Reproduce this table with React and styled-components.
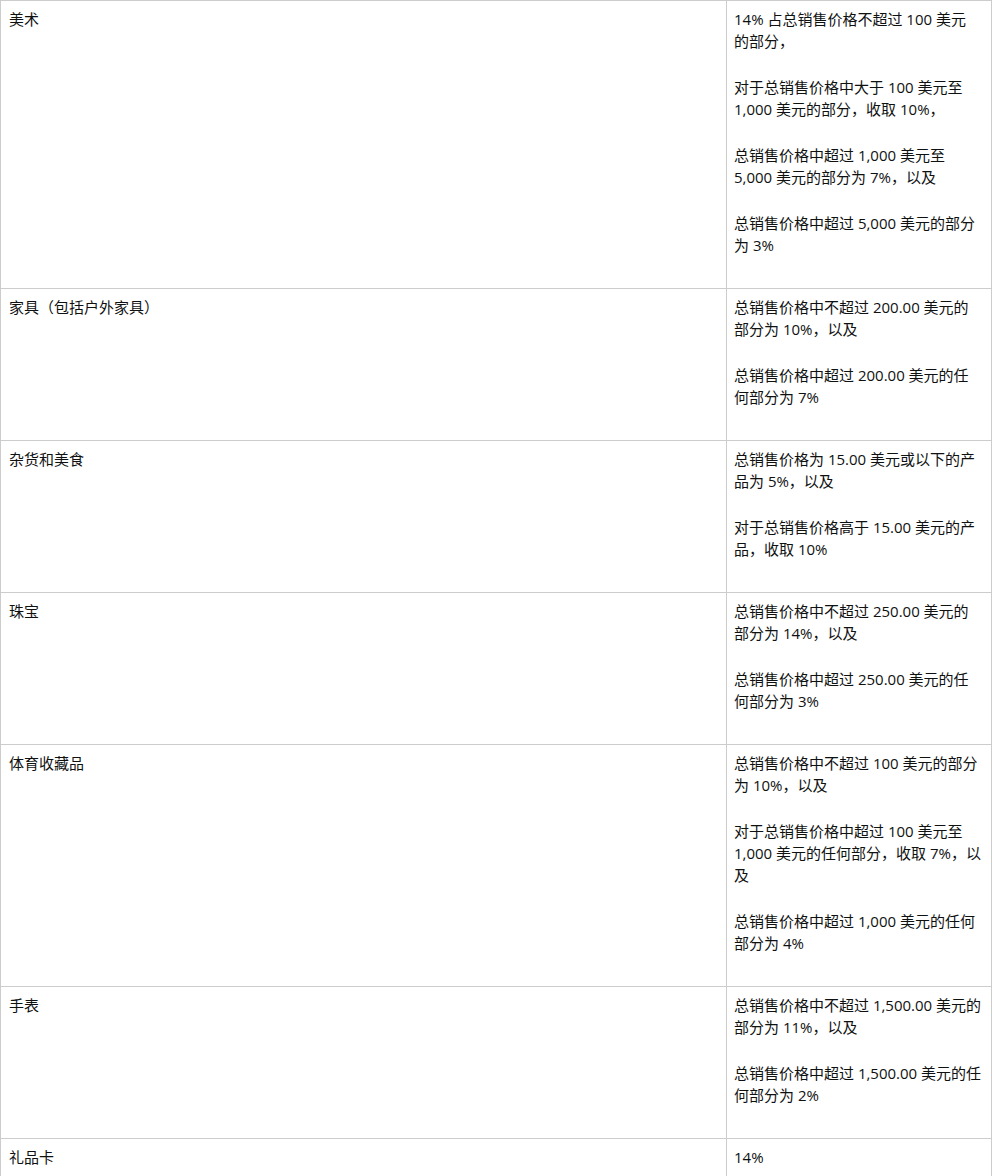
import React from 'react';
import styled, { createGlobalStyle } from 'styled-components';

const GlobalStyle = createGlobalStyle`
  html, body {
    margin: 0;
    padding: 0;
    background: #fff;
  }
  body {
    font-family: "Open Sans", "Noto Sans CJK SC", sans-serif;
    color: #0f1111;
  }
`;

const Table = styled.table`
  width: 992px;
  table-layout: fixed;
  border-collapse: collapse;
  font-size: 15px;
  line-height: 22px;
`;

const Row = styled.tr``;

const Cell = styled.td`
  border: 1px solid #cccccc;
  padding: 7px 8px 8px ${p => (p.$right ? '7px' : '8px')};
  vertical-align: top;
  p {
    margin: 0 0 24px;
  }
`;

const Keep = styled.span`
  white-space: nowrap;
`;

const rows = [
  {
    category: '美术',
    fees: [
      <>14% 占总销售价格不超过 100 美元<Keep>的部分</Keep>，</>,
      '对于总销售价格中大于 100 美元至 1,000 美元的部分，收取 10%，',
      '总销售价格中超过 1,000 美元至 5,000 美元的部分为 7%，以及',
      '总销售价格中超过 5,000 美元的部分为 3%',
    ],
  },
  {
    category: '家具（包括户外家具）',
    fees: [
      '总销售价格中不超过 200.00 美元的部分为 10%，以及',
      '总销售价格中超过 200.00 美元的任何部分为 7%',
    ],
  },
  {
    category: '杂货和美食',
    fees: [
      '总销售价格为 15.00 美元或以下的产品为 5%，以及',
      '对于总销售价格高于 15.00 美元的产品，收取 10%',
    ],
  },
  {
    category: '珠宝',
    fees: [
      '总销售价格中不超过 250.00 美元的部分为 14%，以及',
      '总销售价格中超过 250.00 美元的任何部分为 3%',
    ],
  },
  {
    category: '体育收藏品',
    fees: [
      '总销售价格中不超过 100 美元的部分为 10%，以及',
      '对于总销售价格中超过 100 美元至 1,000 美元的任何部分，收取 7%，以及',
      '总销售价格中超过 1,000 美元的任何部分为 4%',
    ],
  },
  {
    category: '手表',
    fees: [
      '总销售价格中不超过 1,500.00 美元的部分为 11%，以及',
      '总销售价格中超过 1,500.00 美元的任何部分为 2%',
    ],
  },
  {
    category: '礼品卡',
    fees: ['14%'],
  },
];

export default function App() {
  return (
    <>
      <GlobalStyle />
      <Table>
        <colgroup>
          <col style={{ width: 726 }} />
          <col />
        </colgroup>
        <tbody>
          {rows.map(r => (
            <Row key={r.category}>
              <Cell>{r.category}</Cell>
              <Cell $right>
                {r.fees.length > 1
                  ? r.fees.map((f, i) => <p key={i}>{f}</p>)
                  : r.fees[0]}
              </Cell>
            </Row>
          ))}
        </tbody>
      </Table>
    </>
  );
}
